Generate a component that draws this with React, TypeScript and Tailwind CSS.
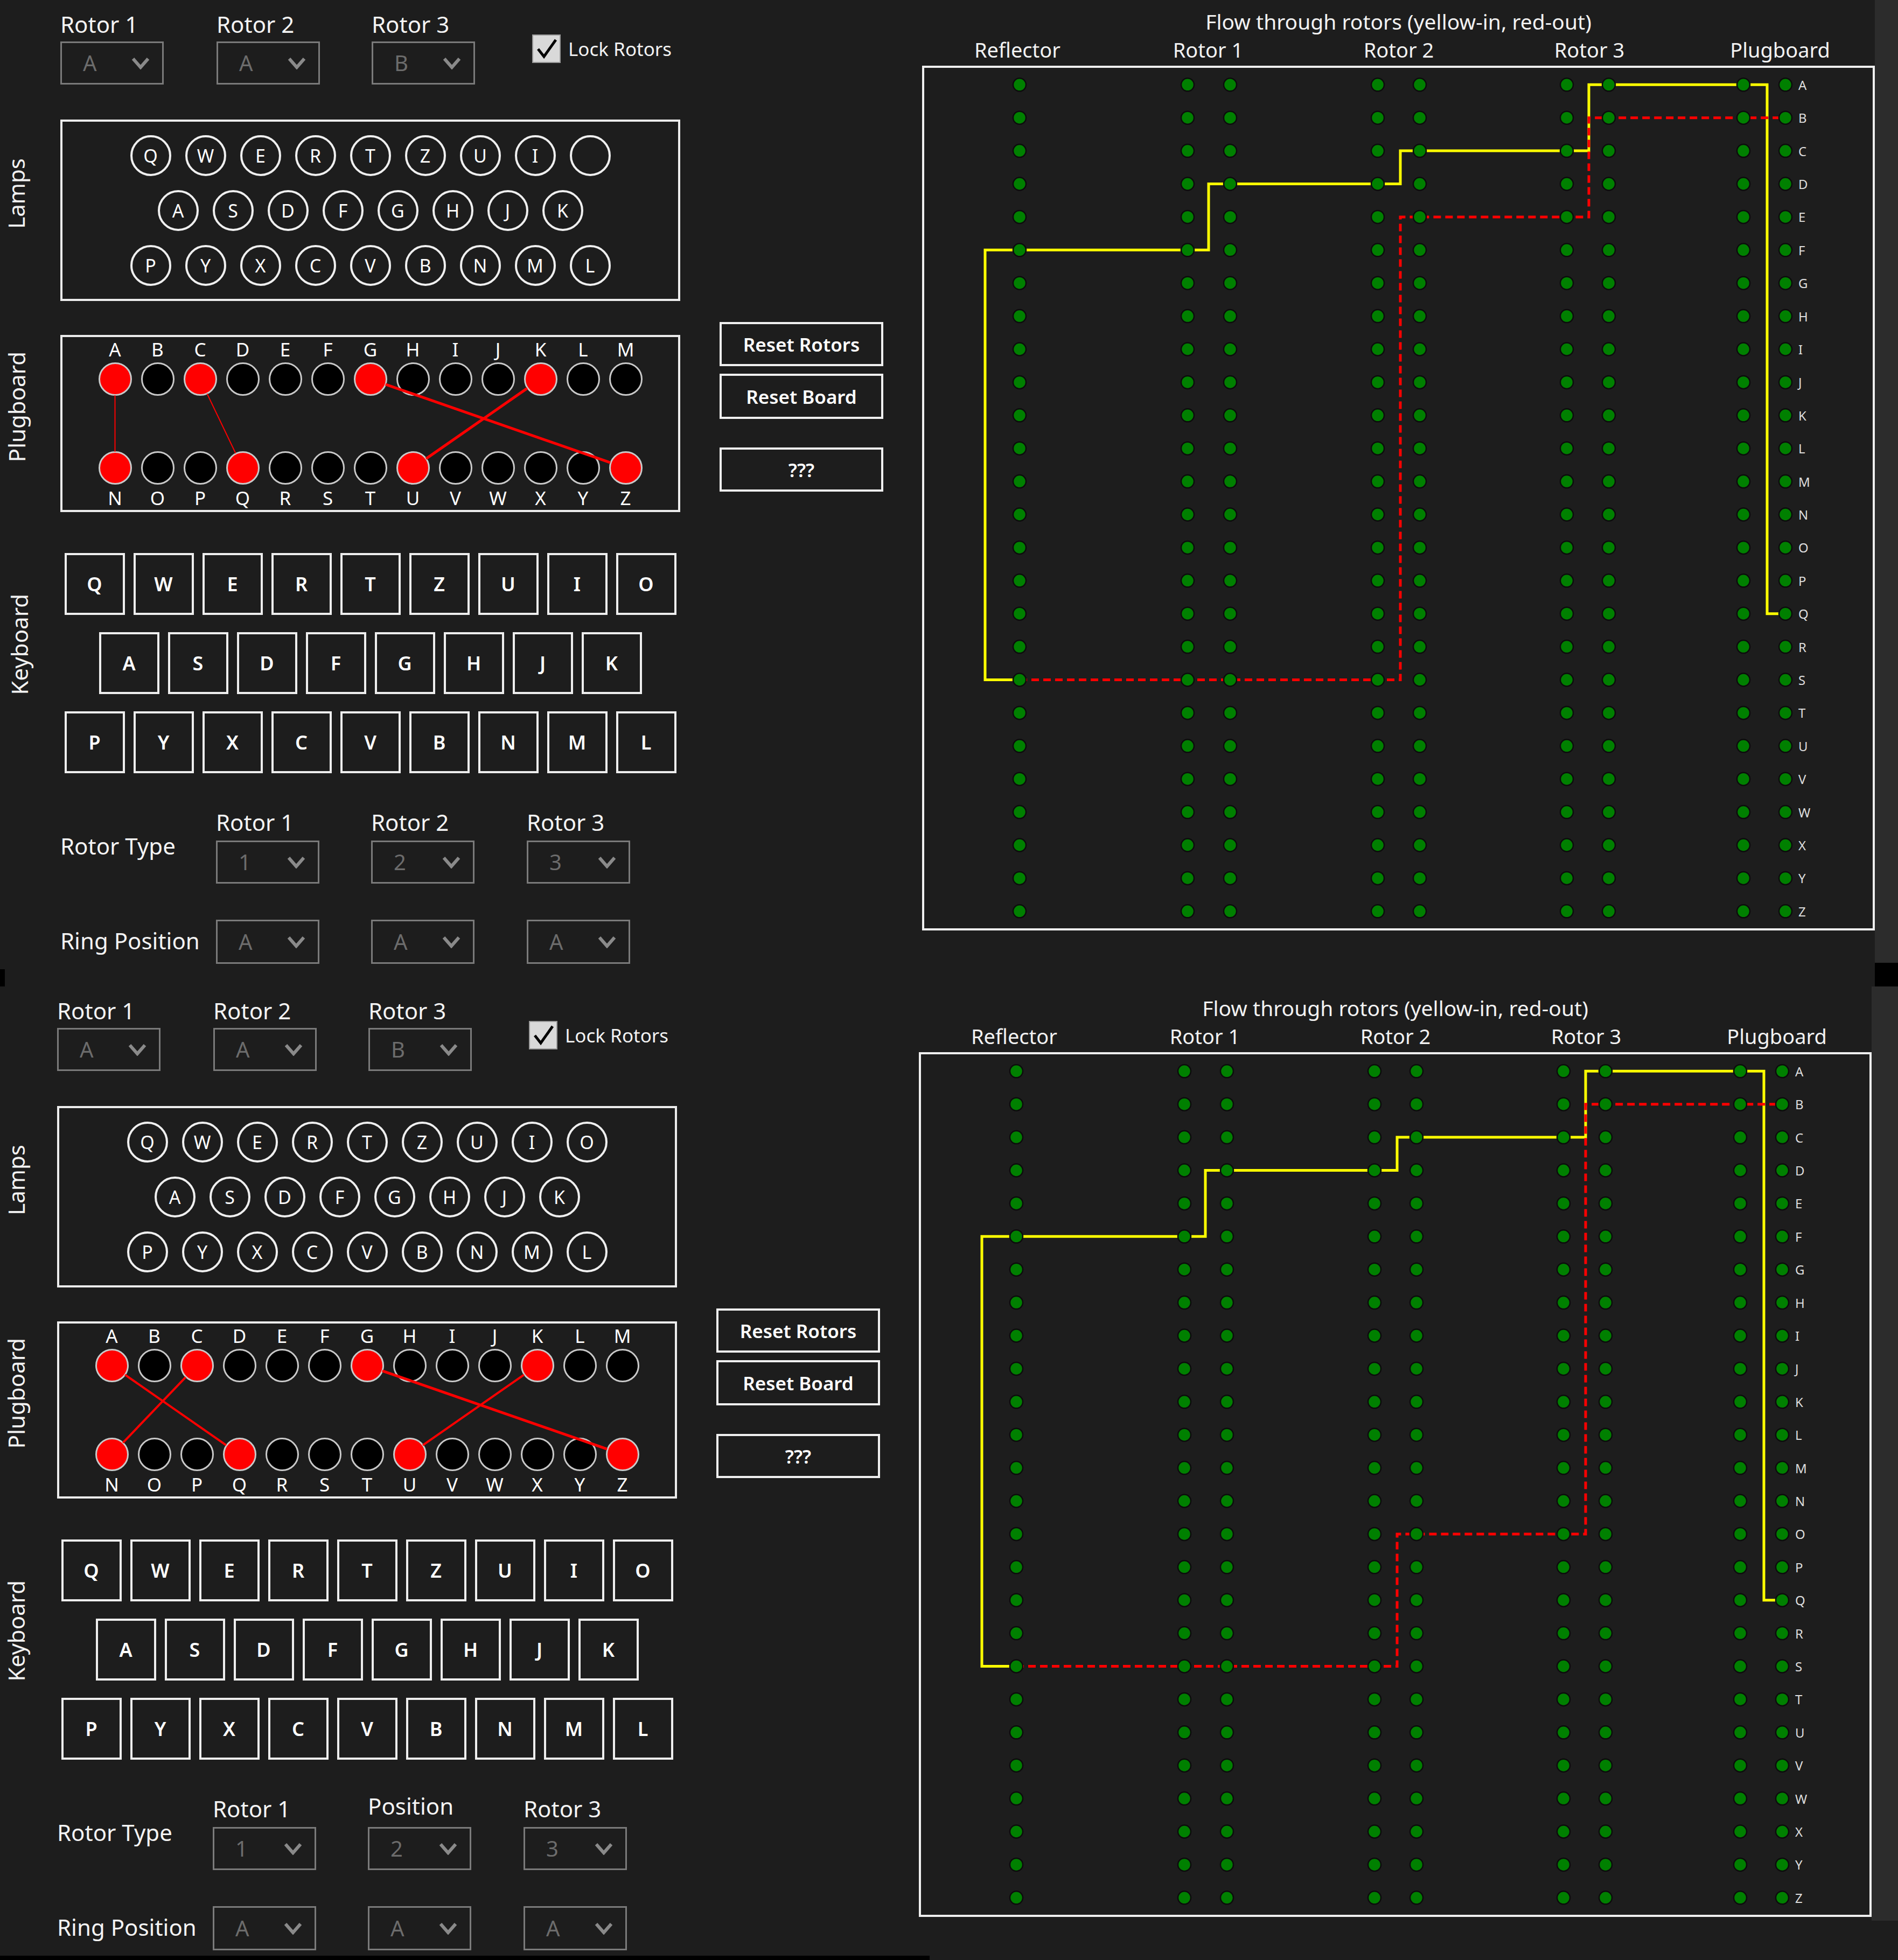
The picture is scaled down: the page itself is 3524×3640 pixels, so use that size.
import React from "react";

const ALPHA = "ABCDEFGHIJKLMNOPQRSTUVWXYZ".split("");

function Dropdown({ value, cls }: { value: string; cls: string }) {
  return (
    <div
      className={
        "w-[192px] shrink-0 border-[3px] border-[#7a7a7a] flex items-center justify-between pl-[39px] pr-[23px] " +
        cls
      }
    >
      <span className="text-[40px] leading-none text-[#6c6c6c]">{value}</span>
      <svg width="34" height="24" viewBox="0 0 34 24">
        <path d="M3 4 L17 20 L31 4" stroke="#8a8a8a" strokeWidth="6" fill="none" />
      </svg>
    </div>
  );
}

function RotorSelect({
  label,
  value,
  gap,
  labelCls = "",
}: {
  label: string;
  value: string;
  gap: string;
  labelCls?: string;
}) {
  return (
    <div className="flex flex-col w-[192px] shrink-0">
      <div className={"text-[42px] leading-none whitespace-nowrap text-[#f4f4f4] " + labelCls}>{label}</div>
      <Dropdown value={value} cls={gap + " h-[80px]"} />
    </div>
  );
}

function SideLabel({ text, cls }: { text: string; cls: string }) {
  return (
    <div
      className={
        "[writing-mode:vertical-rl] rotate-180 text-[42px] leading-none whitespace-nowrap text-[#f2f2f2] " + cls
      }
    >
      {text}
    </div>
  );
}

function Lamp({ ch }: { ch: string }) {
  return (
    <div className="w-[76px] h-[76px] shrink-0 rounded-full border-[4px] border-[#efefef] flex items-center justify-center text-[34px] leading-none text-white">
      {ch}
    </div>
  );
}

function Key({ ch }: { ch: string }) {
  return (
    <div className="w-[112px] h-[115px] shrink-0 border-[4px] border-[#eeeeee] flex items-center justify-center text-[36px] font-semibold leading-none text-white">
      {ch}
    </div>
  );
}

type Wire = { a: number; b: number; w: number };

function Plugboard({ wires }: { wires: Wire[] }) {
  const top = ALPHA.slice(0, 13);
  const bot = ALPHA.slice(13);
  const redTop = [0, 2, 6, 10];
  const redBot = [0, 3, 7, 12];
  const cx = (i: number) => 97.5 + 79 * i;
  const yT = 78;
  const yB = 243;
  return (
    <div className="relative w-[1151px] h-[329px] shrink-0 border-[4px] border-[#ececec] pt-[5px] flex flex-col items-center">
      <div className="flex gap-[17px] h-[35px]">
        {top.map((l) => (
          <div key={l} className="w-[62px] text-center text-[35px] leading-none text-white">
            {l}
          </div>
        ))}
      </div>
      <div className="flex gap-[17px] mt-[7px]">
        {top.map((l, i) => (
          <div
            key={l}
            className={
              "w-[62px] h-[62px] rounded-full border-[3px] border-[#c9c9c9] " +
              (redTop.includes(i) ? "bg-[#ff0000]" : "bg-black")
            }
          />
        ))}
      </div>
      <div className="flex gap-[17px] mt-[103px]">
        {bot.map((l, i) => (
          <div
            key={l}
            className={
              "w-[62px] h-[62px] rounded-full border-[3px] border-[#c9c9c9] " +
              (redBot.includes(i) ? "bg-[#ff0000]" : "bg-black")
            }
          />
        ))}
      </div>
      <div className="flex gap-[17px] h-[35px] mt-[7px]">
        {bot.map((l) => (
          <div key={l} className="w-[62px] text-center text-[35px] leading-none text-white">
            {l}
          </div>
        ))}
      </div>
      <svg className="absolute inset-0" width="1143" height="321">
        {wires.map((w, k) => {
          const x1 = cx(w.a);
          const x2 = cx(w.b);
          const dx = x2 - x1;
          const dy = yB - yT;
          const len = Math.sqrt(dx * dx + dy * dy);
          const r = 30;
          return (
            <line
              key={k}
              x1={x1 + (dx / len) * r}
              y1={yT + (dy / len) * r}
              x2={x2 - (dx / len) * r}
              y2={yB - (dy / len) * r}
              stroke="#ff0000"
              strokeWidth={w.w}
            />
          );
        })}
      </svg>
    </div>
  );
}

function Button({ text, cls }: { text: string; cls: string }) {
  return (
    <div
      className={
        "w-[304px] border-[4px] border-[#f0f0f0] flex items-center justify-center text-[35px] font-semibold leading-none text-white " +
        cls
      }
    >
      {text}
    </div>
  );
}

function LeftCol({ bottom }: { bottom: boolean }) {
  const row1 = bottom ? "QWERTZUIO".split("") : "QWERTZUI ".split("");
  const row2 = "ASDFGHJK".split("");
  const row3 = "PYXCVBNML".split("");
  const wires: Wire[] = bottom
    ? [
        { a: 0, b: 3, w: 4 },
        { a: 2, b: 0, w: 4 },
        { a: 6, b: 12, w: 5 },
        { a: 10, b: 7, w: 4 },
      ]
    : [
        { a: 0, b: 0, w: 2 },
        { a: 2, b: 3, w: 2 },
        { a: 6, b: 12, w: 5 },
        { a: 10, b: 7, w: 5 },
      ];
  return (
    <div className="w-[1712px] shrink-0 flex flex-col pt-[24px]">
      {/* top rotor selectors */}
      <div className="flex">
        <div className="w-[112px] shrink-0" />
        <RotorSelect label="Rotor 1" value="A" gap="mt-[11px]" />
        <div className="ml-[98px]">
          <RotorSelect label="Rotor 2" value="A" gap="mt-[11px]" />
        </div>
        <div className="ml-[96px]">
          <RotorSelect label="Rotor 3" value="B" gap="mt-[11px]" />
        </div>
        <div className="ml-[106px] mt-[39px] h-[54px] flex items-center">
          <div className="w-[53px] h-[53px] bg-[#d9d9d9] border-[2px] border-[#9a9a9a] flex items-center justify-center">
            <svg width="44" height="44" viewBox="0 0 44 44">
              <path d="M6 23 L17 37 L39 6" stroke="#000" strokeWidth="5" fill="none" />
            </svg>
          </div>
          <span className="ml-[14px] text-[35px] leading-none text-[#f2f2f2] whitespace-nowrap">Lock Rotors</span>
        </div>
      </div>

      {/* lamps */}
      <div className="flex mt-[65px]">
        <div className="w-[112px] shrink-0 flex items-center pb-[62px]">
          <SideLabel text="Lamps" cls={bottom ? "ml-[15px]" : "ml-[9px]"} />
        </div>
        <div className="w-[1151px] h-[337px] shrink-0 border-[4px] border-[#ececec] flex flex-col items-center justify-center gap-[26px]">
          {[row1, row2, row3].map((r, ri) => (
            <div key={ri} className="flex gap-[26px]">
              {r.map((c, i) => (
                <Lamp key={i} ch={c.trim()} />
              ))}
            </div>
          ))}
        </div>
      </div>

      {/* plugboard + buttons */}
      <div className="flex mt-[39px]">
        <div className="w-[112px] h-[329px] mt-[24px] shrink-0 flex items-center pb-[62px]">
          <SideLabel text="Plugboard" cls={bottom ? "ml-[15px]" : "ml-[10px]"} />
        </div>
        <div className="mt-[24px]">
          <Plugboard wires={wires} />
        </div>
        <div className="ml-[73px] flex flex-col">
          <Button text="Reset Rotors" cls="h-[82px]" />
          <Button text="Reset Board" cls="h-[84px] mt-[14px]" />
          <Button text="???" cls="h-[82px] mt-[53px]" />
        </div>
      </div>

      {/* keyboard */}
      <div className="flex mt-[76px]">
        <div className="w-[112px] shrink-0 flex items-center pb-[70px]">
          <SideLabel text="Keyboard" cls="ml-[15px]" />
        </div>
        <div className="w-[1151px] shrink-0 flex flex-col items-center gap-[32px]">
          {["QWERTZUIO".split(""), row2, row3].map((r, ri) => (
            <div key={ri} className="flex gap-[16px]">
              {r.map((c, i) => (
                <Key key={i} ch={c} />
              ))}
            </div>
          ))}
        </div>
      </div>

      {/* rotor type */}
      <div className="flex mt-[70px]">
        <div className="w-[112px] shrink-0" />
        <div className="w-[289px] shrink-0 mt-[44px] text-[42px] leading-none whitespace-nowrap text-[#f4f4f4]">
          Rotor Type
        </div>
        <RotorSelect label="Rotor 1" value="1" gap="mt-[13px]" />
        <div className="ml-[96px]">
          {bottom ? (
            <RotorSelect label="Position" value="2" gap="mt-[13px]" labelCls="-mt-[5px] mb-[5px]" />
          ) : (
            <RotorSelect label="Rotor 2" value="2" gap="mt-[13px]" />
          )}
        </div>
        <div className="ml-[97px]">
          <RotorSelect label="Rotor 3" value="3" gap="mt-[13px]" />
        </div>
      </div>

      {/* ring position */}
      <div className="flex items-center mt-[67px]">
        <div className="w-[112px] shrink-0" />
        <div className="w-[289px] shrink-0 -mt-[4px] text-[42px] leading-none whitespace-nowrap text-[#f4f4f4]">
          Ring Position
        </div>
        <Dropdown value="A" cls="h-[82px]" />
        <div className="ml-[96px]">
          <Dropdown value="A" cls="h-[82px]" />
        </div>
        <div className="ml-[97px]">
          <Dropdown value="A" cls="h-[82px]" />
        </div>
      </div>

      {bottom ? (
        <div className="mt-auto w-[1732px] h-[8px] bg-black" />
      ) : (
        <div className="mt-auto w-[9px] h-[32px] bg-black" />
      )}
    </div>
  );
}

function Chart({ redRow }: { redRow: number }) {
  const y = (i: number) => 31.3 + 61.4 * i;
  const cols = [177, 489, 568, 842, 920, 1193, 1271, 1521, 1599];
  const yellow = `M1599 ${y(16)} H1565 V${y(0)} H1234 V${y(2)} H884 V${y(3)} H528 V${y(5)} H113 V${y(18)} H177`;
  const red = `M177 ${y(18)} H884 V${y(redRow)} H1234 V${y(1)} H1599`;
  return (
    <svg width="1761" height="1598" className="block">
      <path d={yellow} stroke="#ffff00" strokeWidth={5} fill="none" strokeLinejoin="miter" />
      <path d={red} stroke="#ff0000" strokeWidth={5} strokeDasharray="14 8" fill="none" />
      {ALPHA.map((l, i) =>
        cols.map((x) => (
          <circle key={l + x} cx={x} cy={y(i)} r={12} fill="#008000" stroke="#0c0c0c" strokeWidth={2.5} />
        ))
      )}
      {ALPHA.map((l, i) => (
        <text key={l} x={1623} y={y(i)} dominantBaseline="central" fontSize={24} fill="#dedede">
          {l}
        </text>
      ))}
    </svg>
  );
}

function ChartCol({ bottom }: { bottom: boolean }) {
  const headers = ["Reflector", "Rotor 1", "Rotor 2", "Rotor 3", "Plugboard"];
  return (
    <div className="w-[1769px] shrink-0 flex flex-col pt-[20px]">
      <div className="text-[39px] leading-none text-center whitespace-nowrap text-[#f2f2f2]">
        Flow through rotors (yellow-in, red-out)
      </div>
      <div className="flex mt-[14px]">
        {headers.map((h) => (
          <div key={h} className="w-[354px] shrink-0 text-center text-[38px] leading-none whitespace-nowrap text-[#f2f2f2]">
            {h}
          </div>
        ))}
      </div>
      <div className="mt-[11px] w-[1769px] h-[1606px] border-[4px] border-[#efefef]">
        <Chart redRow={bottom ? 14 : 4} />
      </div>
    </div>
  );
}

function Panel({ bottom }: { bottom: boolean }) {
  return (
    <div className={bottom ? "flex h-[1808px] w-[3530px] -ml-[6px]" : "flex h-[1832px] w-[3524px]"}>
      <LeftCol bottom={bottom} />
      <ChartCol bottom={bottom} />
      {bottom ? (
        <div className="w-[49px] shrink-0 flex flex-col">
          <div className="h-[1735px] bg-[#2c2c2c]" />
        </div>
      ) : (
        <div className="w-[43px] shrink-0 flex flex-col">
          <div className="h-[1788px] bg-[#2c2c2c]" />
          <div className="flex-1 bg-black" />
        </div>
      )}
    </div>
  );
}

export default function App() {
  return (
    <div className="w-[3524px] h-[3640px] bg-[#1d1d1d] overflow-hidden font-['Noto_Sans','Open_Sans',sans-serif] text-[#f5f5f5]">
      <Panel bottom={false} />
      <Panel bottom={true} />
    </div>
  );
}
